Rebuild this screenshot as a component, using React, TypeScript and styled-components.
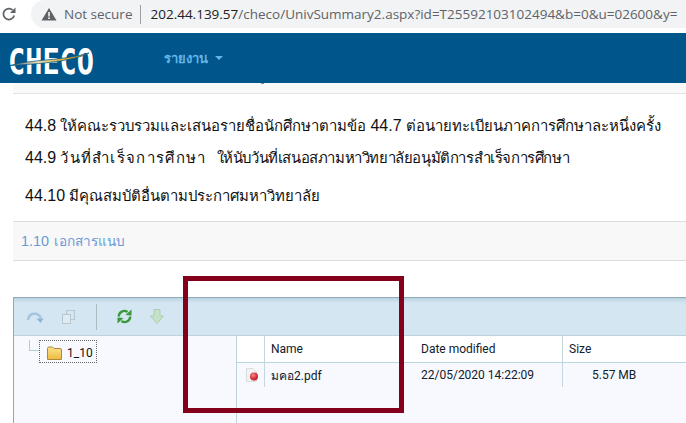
import * as React from 'react';
import styled, { createGlobalStyle } from 'styled-components';

const GlobalStyle = createGlobalStyle`
  html, body { margin: 0; padding: 0; background: #fff; }
  body { font-family: "Liberation Sans", Arial, sans-serif; }
`;

const Page = styled.div`
  position: relative;
  width: 686px;
  height: 423px;
  overflow: hidden;
  background: #fff;
`;

const BrowserBar = styled.div`
  height: 33px;
  display: flex;
  align-items: flex-start;
  box-sizing: border-box;
  background: #fff;
`;

const Reload = styled.div`
  width: 18px;
  height: 28px;
  margin-right: 13px;
  display: flex;
  align-items: center;
  justify-content: center;
`;

const Omnibox = styled.div`
  flex: 1;
  height: 28px;
  display: flex;
  align-items: center;
  padding-left: 10px;
  background: #f1f3f4;
  border-radius: 14px 0 0 14px;
  font-family: "Open Sans", sans-serif;
  font-size: 13.5px;
  white-space: nowrap;
  overflow: hidden;
`;

const NotSecure = styled.span`
  color: #5f6368;
  margin-left: 7px;
`;

const UrlDivider = styled.span`
  width: 1px;
  height: 19px;
  background: #9aa0a6;
  margin: 0 9px 0 8px;
`;

const Host = styled.span`
  color: #202124;
`;

const UrlPath = styled.span`
  color: #5f6368;
`;

const NavBar = styled.div`
  height: 50px;
  display: flex;
  align-items: center;
  background: #00558a;
`;

const Logo = styled.svg`
  margin: 5px 0 0 8px;
  width: 88px;
  height: 30px;
  flex: none;
`;

const NavLink = styled.div`
  margin-left: 68px;
  display: flex;
  align-items: center;
  gap: 7px;
  color: #62b6e7;
  font-size: 13px;
  font-weight: bold;
`;

const Caret = styled.span`
  width: 0;
  height: 0;
  border-left: 4px solid transparent;
  border-right: 4px solid transparent;
  border-top: 4px solid #62b6e7;
`;

const TopStrip = styled.div`
  position: relative;
  height: 10px;
  margin-left: 13px;
  background: #f9f9f9;
  border-bottom: 1px solid #e3e3e3;

  &::after {
    content: '';
    position: absolute;
    left: 248px;
    top: 0;
    width: 3px;
    height: 1px;
    background: #5a8fc0;
  }
`;

const Body = styled.div`
  padding: 0 0 0 25px;
  color: #111;
  font-size: 14.9px;
`;

const Clause = styled.p<{ $top: number }>`
  margin: ${(p) => p.$top}px 0 0;
  height: 24px;
  line-height: 24px;
  white-space: nowrap;
`;

const Num = styled.span`
  font-size: 16px;
`;

const Segment = styled.span<{ $track: number; $gap?: number }>`
  letter-spacing: ${(p) => p.$track}px;
  margin-right: ${(p) => p.$gap ?? 0}px;
`;

const SectionTitle = styled.div`
  height: 38px;
  margin: 13px 0 0 13px;
  padding-left: 8px;
  display: flex;
  align-items: center;
  gap: 5px;
  background: #f8f8f8;
  border-top: 1px solid #ddd;
  border-bottom: 1px solid #ddd;
  color: #6a9ad6;
  font-size: 13.6px;
`;

const SectionNum = styled.span`
  font-size: 14.4px;
`;

const FileManager = styled.div`
  margin: 36px 0 0 13px;
  height: 127px;
  display: flex;
  flex-direction: column;
  border-top: 1px solid #8facb2;
  border-left: 1px solid #8facb2;
  background: #f8f9fe;
  font-family: Roboto, sans-serif;
  font-size: 12px;
  color: #10202c;
`;

const Toolbar = styled.div`
  height: 37px;
  flex: none;
  display: flex;
  align-items: center;
  box-sizing: content-box;
  background: linear-gradient(#b9d3e0 0, #d4e6f2 5px);
  border-bottom: 1px solid #bdd3dc;
`;

const ToolIcon = styled.svg<{ $left: number }>`
  margin-left: ${(p) => p.$left}px;
  flex: none;
`;

const ToolSeparator = styled.span`
  width: 1px;
  height: 26px;
  margin-left: 21px;
  background: #aebcc2;
`;

const Panes = styled.div`
  flex: 1;
  display: flex;
`;

const TreePane = styled.div`
  width: 223px;
  flex: none;
  box-sizing: border-box;
  padding: 4px 0 0 15px;
  display: flex;
  align-items: flex-start;
  border-right: 1px solid #bdd3dc;
`;

const TreeLine = styled.span`
  width: 10px;
  height: 11px;
  flex: none;
  box-sizing: border-box;
  border-left: 1px solid #b4cad6;
  border-bottom: 1px solid #b4cad6;
`;

const TreeNode = styled.div`
  width: 58px;
  height: 23px;
  flex: none;
  box-sizing: border-box;
  display: flex;
  align-items: center;
  gap: 5px;
  padding: 2px 0 0 7px;
  border: 1px dotted #666;
  color: #111;
`;

const Grid = styled.div`
  flex: 1;
  display: grid;
  grid-template-columns: 28px 150px 148px 1fr;
  grid-auto-rows: min-content;
`;

const Cell = styled.div<{ $head?: boolean; $divider?: boolean; $indent?: number }>`
  height: ${(p) => (p.$head ? 26 : 24)}px;
  display: flex;
  align-items: center;
  white-space: nowrap;
  box-sizing: content-box;
  padding-left: ${(p) => p.$indent ?? 6}px;
  background: ${(p) => (p.$head ? '#fff' : 'transparent')};
  border-bottom: ${(p) => (p.$head ? '1px solid #bdd3dc' : 'none')};
  border-right: ${(p) => (p.$divider ? '1px solid #c3d7df' : 'none')};
`;

const Highlight = styled.div`
  position: absolute;
  left: 183px;
  top: 276px;
  width: 221px;
  height: 137px;
  box-sizing: border-box;
  border: 5px solid #85001a;
`;

export default function App() {
  return (
    <Page>
      <GlobalStyle />
      <BrowserBar>
        <Reload>
          <svg width="16" height="16" viewBox="0 0 16 16">
            <path d="M13.2 9.5A5.5 5.5 0 1 1 11.6 4" fill="none" stroke="#5f6368" strokeWidth="1.7" />
            <path d="M14.5 1.5V7H9z" fill="#5f6368" />
          </svg>
        </Reload>
        <Omnibox>
          <svg width="16" height="14" viewBox="0 0 16 14">
            <path d="M8 1 15.5 13.5H.5z" fill="#5f6368" />
            <rect x="7.2" y="5" width="1.6" height="4.5" fill="#f1f3f4" />
            <rect x="7.2" y="10.4" width="1.6" height="1.6" fill="#f1f3f4" />
          </svg>
          <NotSecure>Not secure</NotSecure>
          <UrlDivider />
          <Host>202.44.139.57</Host>
          <UrlPath>/checo/UnivSummary2.aspx?id=T25592103102494&amp;b=0&amp;u=02600&amp;y=</UrlPath>
        </Omnibox>
      </BrowserBar>
      <NavBar>
        <Logo viewBox="-2 0 88 30">
          <defs>
            <linearGradient id="swoosh" x1="0" x2="1" y1="0" y2="0">
              <stop offset="0" stopColor="#55656c" />
              <stop offset="0.35" stopColor="#e8dcae" />
              <stop offset="0.7" stopColor="#dba92c" />
              <stop offset="1" stopColor="#b98a1e" />
            </linearGradient>
          </defs>
          <text
            x="-2"
            y="27.5"
            textLength="86"
            lengthAdjust="spacingAndGlyphs"
            fontFamily="DejaVu Sans Mono"
            fontWeight="bold"
            fontSize="35"
            fill="#fff"
          >
            CHECO
          </text>
          <path d="M0 19.5C22 13 52 15 79 7 64 15 30 18 0 19.5z" fill="url(#swoosh)" stroke="#00558a" strokeWidth="0.7" />
        </Logo>
        <NavLink>
          รายงาน
          <Caret />
        </NavLink>
      </NavBar>
      <TopStrip />
      <Body>
        <Clause $top={20}>
          <Num>44.8</Num> ให้คณะรวบรวมและเสนอรายชื่อนักศึกษาตามข้อ <Num>44.7</Num> ต่อนายทะเบียนภาคการศึกษาละหนึ่งครั้ง
        </Clause>
        <Clause $top={8}>
          <Num>44.9</Num> <Segment $track={1.3} $gap={6}>วันที่สำเร็จการศึกษา</Segment>{' '}
          <Segment $track={-0.4}>ให้นับวันที่เสนอสภามหาวิทยาลัยอนุมัติการสำเร็จการศึกษา</Segment>
        </Clause>
        <Clause $top={14}>
          <Num>44.10</Num> มีคุณสมบัติอื่นตามประกาศมหาวิทยาลัย
        </Clause>
      </Body>
      <SectionTitle>
        <SectionNum>1.10</SectionNum>
        เอกสารแนบ
      </SectionTitle>
      <FileManager>
        <Toolbar>
          <ToolIcon $left={12} width="18" height="14" viewBox="0 0 18 14">
            <path d="M2 10C3 3 11 1 15 8" fill="none" stroke="#a6c3de" strokeWidth="2.4" />
            <path d="M10.5 8.5H17.5L14.5 13z" fill="#8fb3d3" />
          </ToolIcon>
          <ToolIcon $left={18} width="13" height="14" viewBox="0 0 13 14">
            <rect x="4.5" y="0.5" width="8" height="9" fill="#d4e6f2" stroke="#b8c6cf" />
            <rect x="0.5" y="4.5" width="8" height="9" fill="#dfebf3" stroke="#b8c6cf" />
          </ToolIcon>
          <ToolSeparator />
          <ToolIcon $left={20} width="15" height="15" viewBox="0 0 15 15">
            <path d="M1.8 7.5A5.5 5.5 0 0 1 10.5 3" fill="none" stroke="#3c963c" strokeWidth="2.4" />
            <path d="M13.2 7.5A5.5 5.5 0 0 1 4.5 12" fill="none" stroke="#3c963c" strokeWidth="2.4" />
            <path d="M8.5 6 14.5 6.5V.5z" fill="#3c963c" />
            <path d="M6.5 9 .5 8.5V14.5z" fill="#3c963c" />
          </ToolIcon>
          <ToolIcon $left={18} width="14" height="15" viewBox="0 0 14 15">
            <path d="M4 .5H10V7H13.5L7 14.5.5 7H4z" fill="#c6e1c9" stroke="#a9cfb0" />
          </ToolIcon>
        </Toolbar>
        <Panes>
          <TreePane>
            <TreeLine />
            <TreeNode>
              <svg width="15" height="14" viewBox="0 0 15 14">
                <defs>
                  <linearGradient id="folder" x1="0" x2="0" y1="0" y2="1">
                    <stop offset="0" stopColor="#fbe28e" />
                    <stop offset="1" stopColor="#eebb3c" />
                  </linearGradient>
                </defs>
                <path d="M.5 2.5Q.5 1 2 1H5.5L7 2.5H13Q14.5 2.5 14.5 4V13.5H.5z" fill="url(#folder)" stroke="#a98a3c" />
              </svg>
              1_10
            </TreeNode>
          </TreePane>
          <Grid>
            <Cell $head $divider />
            <Cell $head>Name</Cell>
            <Cell $head $divider>Date modified</Cell>
            <Cell $head>Size</Cell>
            <Cell $divider $indent={9}>
              <svg width="12" height="14" viewBox="0 0 12 14">
                <defs>
                  <radialGradient id="ball" cx="0.4" cy="0.35" r="0.7">
                    <stop offset="0" stopColor="#f08a8a" />
                    <stop offset="0.6" stopColor="#d8343c" />
                    <stop offset="1" stopColor="#b02228" />
                  </radialGradient>
                </defs>
                <path d="M.5.5H7L10.5 4V13.5H.5z" fill="#f3f3f3" stroke="#dcdcdc" />
                <circle cx="8" cy="8.5" r="4" fill="url(#ball)" />
              </svg>
            </Cell>
            <Cell>มคอ2.pdf</Cell>
            <Cell $divider>22/05/2020 14:22:09</Cell>
            <Cell $indent={29}>5.57 MB</Cell>
          </Grid>
        </Panes>
      </FileManager>
      <Highlight />
    </Page>
  );
}
